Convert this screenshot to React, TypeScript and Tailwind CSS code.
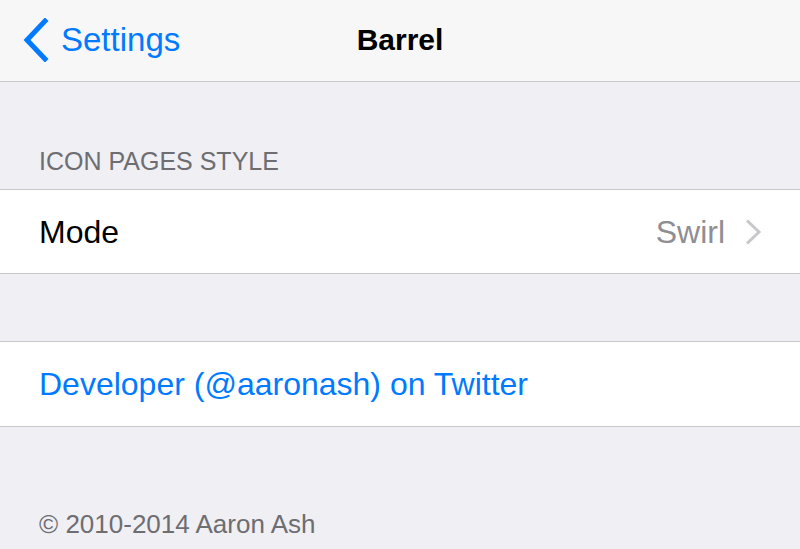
const font = "font-['Liberation_Sans','Helvetica_Neue',Arial,sans-serif]";

function BackChevron() {
  return (
    <svg width="28" height="44" viewBox="0 0 28 44" className="shrink-0">
      <polyline
        points="23,3 5,22 23,41"
        fill="none"
        stroke="#007aff"
        strokeWidth="5"
        strokeLinecap="square"
        strokeLinejoin="miter"
      />
    </svg>
  );
}

function RowChevron() {
  return (
    <svg width="18" height="26" viewBox="0 0 18 26" className="shrink-0">
      <polyline
        points="2,1.5 14,13 2,24.5"
        fill="none"
        stroke="#c7c7cc"
        strokeWidth="3"
        strokeLinecap="butt"
      />
    </svg>
  );
}

export default function App() {
  return (
    <div className={`h-[549px] w-[800px] overflow-hidden bg-[#efeff4] ${font}`}>
      {/* Nav bar */}
      <header className="grid h-[82px] grid-cols-[1fr_auto_1fr] items-center border-b border-[#c8c7cc] bg-[#f7f7f7]">
        <div className="flex items-center gap-[11px] pl-[22px] pb-[2px]">
          <BackChevron />
          <span className="text-[33px] leading-[40px] text-[#007aff]">Settings</span>
        </div>
        <div className="pb-[2px] text-[30px] font-bold leading-[40px] text-black">Barrel</div>
        <div />
      </header>

      {/* Section header */}
      <div className="px-[39px] pb-[13px] pt-[64px] text-[25px] leading-[30px] text-[#6d6d72]">
        ICON PAGES STYLE
      </div>

      {/* Mode row */}
      <div className="flex h-[85px] items-center border-y border-[#c8c7cc] bg-white pl-[39px] pr-[37px]">
        <span className="flex-1 text-[32px] leading-[40px] text-black">Mode</span>
        <span className="mr-[20px] text-[32px] leading-[40px] text-[#8e8e93]">Swirl</span>
        <RowChevron />
      </div>

      <div className="h-[67px]" />

      {/* Twitter row */}
      <div className="flex h-[86px] items-center border-y border-[#c8c7cc] bg-white px-[39px]">
        <span className="text-[32px] leading-[40px] text-[#007aff]">Developer (@aaronash) on Twitter</span>
      </div>

      {/* Footer */}
      <div className="mt-[82px] px-[39px] text-[26px] leading-[30px] text-[#6d6d72]">
        © 2010-2014 Aaron Ash
      </div>
    </div>
  );
}
